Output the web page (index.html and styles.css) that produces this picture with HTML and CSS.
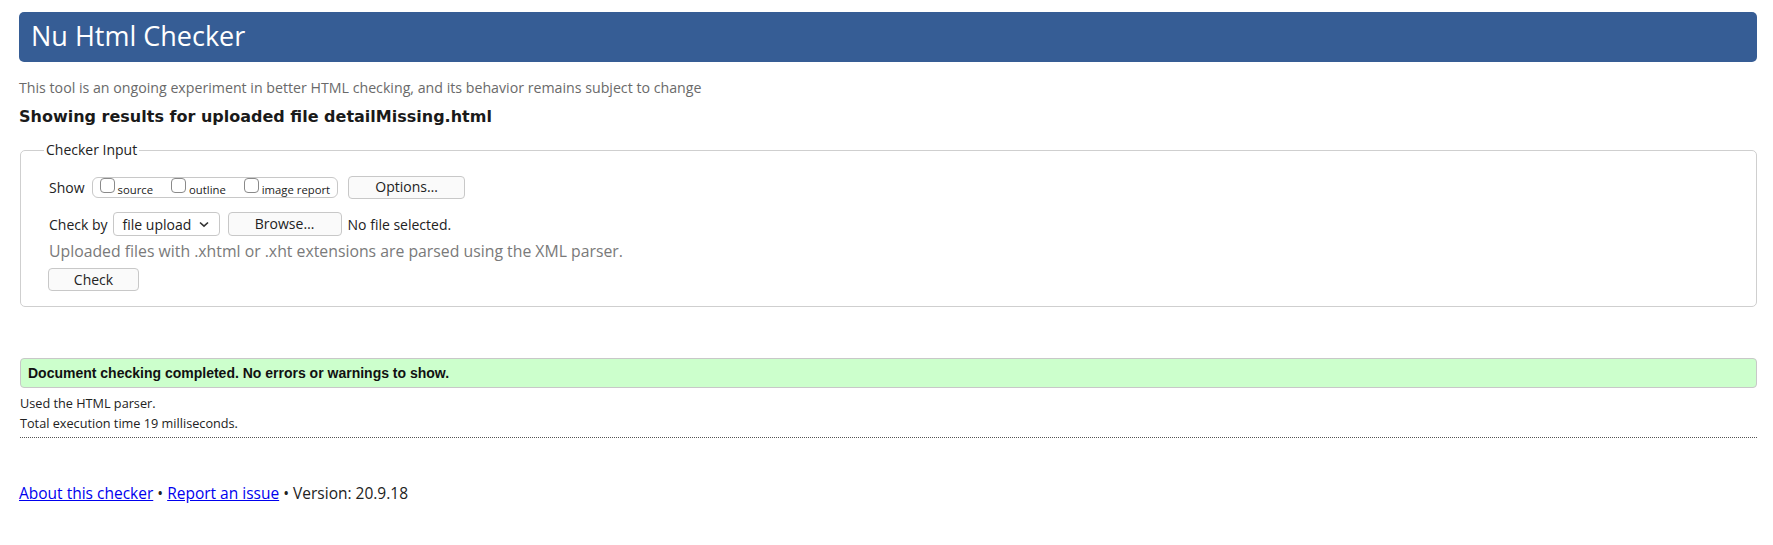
FILE: index.html
```html
<!DOCTYPE html>
<html lang="en">
<head>
<meta charset="utf-8">
<title>Showing results for uploaded file detailMissing.html - Nu Html Checker</title>
<link rel="stylesheet" href="styles.css">
</head>
<body>
<h1 class="banner">Nu Html Checker</h1>
<p class="sub">This tool is an ongoing experiment in better HTML checking, and its behavior remains subject to change</p>
<h2 class="results-title">Showing results for uploaded file detailMissing.html</h2>
<fieldset class="input">
  <legend class="input-legend">Checker Input</legend>
  <div class="row row-show">
    <span class="label label-show">Show</span>
    <span class="group">
      <label class="opt"><input type="checkbox" class="cb"><span class="opt-text">source</span></label>
      <label class="opt"><input type="checkbox" class="cb"><span class="opt-text">outline</span></label>
      <label class="opt"><input type="checkbox" class="cb"><span class="opt-text">image report</span></label>
    </span>
    <button class="btn btn-options" type="button">Options…</button>
  </div>
  <div class="row row-check">
    <span class="label">Check by</span>
    <span class="select">file upload
      <svg class="chev" width="10" height="7" viewBox="0 0 10 7"><path d="M1 1.5 L5 5.2 L9 1.5" fill="none" stroke="#333" stroke-width="1.6"/></svg>
    </span>
    <button class="btn btn-browse" type="button">Browse…</button>
    <span class="nofile">No file selected.</span>
  </div>
  <p class="hint">Uploaded files with .xhtml or .xht extensions are parsed using the XML parser.</p>
  <button class="btn btn-check" type="button">Check</button>
</fieldset>
<p class="success">Document checking completed. No errors or warnings to show.</p>
<p class="details">Used the HTML parser.</p>
<p class="details">Total execution time 19 milliseconds.</p>
<div class="rule"></div>
<p class="footer"><a href="#">About this checker</a> • <a href="#">Report an issue</a> • Version: 20.9.18</p>
</body>
</html>
```
FILE: styles.css
```css
html { background: #fff; }
body {
  margin: 0;
  padding: 12px 16px 0 19px;
  font-family: "Open Sans", "DejaVu Sans", sans-serif;
  color: #222;
}
.banner {
  margin: 0;
  height: 50px;
  background: #365d95;
  border-radius: 5px;
  color: #fff;
  font-weight: normal;
  font-size: 27px;
  line-height: 48px;
  padding-left: 12px;
}
.sub {
  margin: 16px 0 0;
  font-size: 14.2px;
  line-height: 20px;
  color: #6a6a6a;
}
.results-title {
  margin: 9px 0 0;
  font-family: "DejaVu Sans", sans-serif;
  font-size: 16px;
  line-height: 20px;
  color: #1a1a1a;
}
.input {
  margin: 13px 0 0 1px;
  padding: 0 0 15px 28px;
  border: 1px solid #cfcfcf;
  border-radius: 5px;
  min-width: 0;
}
.input-legend {
  margin-left: -5px;
  padding: 0 2px;
  font-size: 14px;
  line-height: 20px;
  color: #222;
}
.row {
  display: flex;
  align-items: center;
}
.row-show { margin-top: 16px; height: 22px; }
.row-check { margin-top: 14px; height: 24px; }
.label {
  font-size: 14px;
  margin-right: 5px;
}
.label-show { margin-right: 7px; }
.group {
  display: flex;
  align-items: flex-start;
  height: 19px;
  border: 1px solid #c8c8c8;
  border-radius: 6px;
  padding: 0 7px 0 7px;
  align-self: flex-start;
  margin-top: 1px;
}
.opt {
  display: flex;
  align-items: flex-start;
  margin-right: 18px;
}
.opt:last-child { margin-right: 0; }
.cb {
  appearance: none;
  -webkit-appearance: none;
  width: 15px;
  height: 15px;
  margin: 0 3px 0 0;
  border: 1px solid #8a8a8a;
  border-radius: 4px;
  background: #fff;
}
.opt-text {
  font-size: 11.3px;
  line-height: 14px;
  margin-top: 5px;
}
.btn {
  font-family: "Open Sans", "DejaVu Sans", sans-serif;
  font-size: 14px;
  color: #222;
  background: #fafafa;
  border: 1px solid #c8c8c8;
  border-radius: 4px;
  height: 23px;
  padding: 0;
  line-height: 20px;
}
.btn-options { width: 117px; margin-left: 10px; }
.select {
  display: flex;
  align-items: center;
  gap: 8px;
  height: 24px;
  box-sizing: border-box;
  width: 107px;
  padding-left: 9px;
  border: 1px solid #c8c8c8;
  border-radius: 4px;
  font-size: 14px;
  background: #fff;
}
.btn-browse { width: 114px; margin-left: 8px; height: 24px; }
.nofile { font-size: 14px; margin-left: 6px; }
.hint {
  margin: 5px 0 0;
  font-size: 15.8px;
  line-height: 20px;
  color: #7a7a7a;
}
.btn-check {
  margin-top: 7px;
  margin-left: -1px;
  width: 91px;
  height: 23px;
}
.success {
  margin: 51px 0 0 1px;
  height: 30px;
  box-sizing: border-box;
  border: 1px solid #c8c8c8;
  border-radius: 4px;
  background: #ccffcc;
  font-family: "Liberation Sans Narrow", "Liberation Sans", sans-serif;
  font-weight: bold;
  font-size: 14px;
  line-height: 28px;
  padding-left: 7px;
  color: #111;
}
.details {
  margin: 0 0 0 1px;
  font-size: 12.7px;
  line-height: 20px;
  color: #222;
}
.success + .details { margin-top: 5px; }
.rule {
  margin: 4px 0 0 1px;
  border-top: 1px dotted #555;
}
.footer {
  margin: 45px 0 0;
  font-size: 15.5px;
  line-height: 20px;
  color: #222;
}
.footer a { color: #0000ee; }
```
